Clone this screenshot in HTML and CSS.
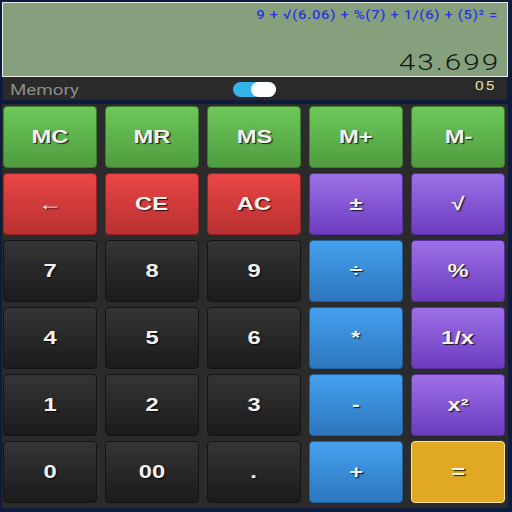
FILE: index.html
```html
<!DOCTYPE html>
<html>
<head>
<meta charset="utf-8">
<link rel="stylesheet" href="styles.css">
</head>
<body>
<div class="app">
  <div class="display">
    <div class="expr">9 + √(6.06) + %(7) + 1/(6) + (5)² =</div>
    <div class="result">43.699</div>
  </div>
  <div class="memory">
    <span class="mem-label">Memory</span>
    <span class="toggle"><span class="knob"></span></span>
    <span class="mem-count">05</span>
  </div>
  <div class="keypad">
    <button class="key green"><span>MC</span></button>
    <button class="key green"><span>MR</span></button>
    <button class="key green"><span>MS</span></button>
    <button class="key green"><span>M+</span></button>
    <button class="key green"><span>M-</span></button>

    <button class="key red"><span>←</span></button>
    <button class="key red"><span>CE</span></button>
    <button class="key red"><span>AC</span></button>
    <button class="key purple"><span>±</span></button>
    <button class="key purple"><span>√</span></button>

    <button class="key dark"><span>7</span></button>
    <button class="key dark"><span>8</span></button>
    <button class="key dark"><span>9</span></button>
    <button class="key blue"><span>÷</span></button>
    <button class="key purple"><span>%</span></button>

    <button class="key dark"><span>4</span></button>
    <button class="key dark"><span>5</span></button>
    <button class="key dark"><span>6</span></button>
    <button class="key blue"><span>*</span></button>
    <button class="key purple"><span>1/x</span></button>

    <button class="key dark"><span>1</span></button>
    <button class="key dark"><span>2</span></button>
    <button class="key dark"><span>3</span></button>
    <button class="key blue"><span>-</span></button>
    <button class="key purple"><span>x²</span></button>

    <button class="key dark"><span>0</span></button>
    <button class="key dark"><span>00</span></button>
    <button class="key dark"><span>.</span></button>
    <button class="key blue"><span>+</span></button>
    <button class="key yellow"><span>=</span></button>
  </div>
</div>
</body>
</html>
```
FILE: styles.css
```css
html, body {
  margin: 0;
  padding: 0;
  background: #0c1b3e;
  width: 512px;
  height: 512px;
  overflow: hidden;
}
.app {
  display: flex;
  flex-direction: column;
  padding-top: 2px;
  padding-left: 2px;
}
.display {
  box-sizing: border-box;
  width: 506px;
  height: 75px;
  border: 1px solid #e6ebe3;
  background: #86a07e;
  display: flex;
  flex-direction: column;
  align-items: flex-end;
  justify-content: space-between;
  padding: 4px 9px 3px 0;
}
.expr {
  font-family: Roboto, "Noto Sans", sans-serif;
  font-size: 13px;
  line-height: 15px;
  font-weight: 500;
  color: #2a36e0;
  letter-spacing: 0.6px;
  transform: scaleX(1.14);
  transform-origin: right center;
}
.result {
  font-family: Roboto, "DejaVu Sans", sans-serif;
  font-weight: 300;
  font-size: 22px;
  line-height: 20px;
  color: #111a11;
  letter-spacing: 1.5px;
  transform: scaleX(1.35);
  transform-origin: right center;
  margin-right: -2px;
}
.memory {
  box-sizing: border-box;
  width: 504px;
  height: 23px;
  margin-left: 1px;
  background: #2a2a2a;
  display: flex;
  align-items: center;
}
.mem-label {
  font-family: Roboto, "Noto Sans", sans-serif;
  font-size: 15px;
  color: #8c8c8c;
  margin-left: 7px;
  margin-top: 2px;
  display: inline-block;
  transform: scaleX(1.25);
  transform-origin: left center;
  width: 55px;
}
.toggle {
  width: 43px;
  height: 15px;
  border-radius: 8px;
  background: #33b5e8;
  margin-left: 168px;
  margin-top: 1px;
  display: flex;
  justify-content: flex-end;
  align-items: center;
}
.knob {
  width: 25px;
  height: 15px;
  border-radius: 8px;
  background: #ffffff;
}
.mem-count {
  font-family: Roboto, "DejaVu Sans", sans-serif;
  font-weight: 400;
  font-size: 13px;
  line-height: 13px;
  color: #e8dc9c;
  margin-left: auto;
  margin-right: 11px;
  margin-top: -6px;
  letter-spacing: 1px;
  display: inline-block;
  transform: scaleX(1.25);
  transform-origin: right center;
}
.keypad {
  box-sizing: border-box;
  width: 506px;
  height: 404px;
  margin-top: 4px;
  background: #2b2b2b;
  display: grid;
  grid-template-columns: repeat(5, 94px);
  grid-auto-rows: 62px;
  column-gap: 8px;
  row-gap: 5px;
  padding: 2px 3px 5px 1px;
}
.key {
  box-sizing: border-box;
  margin: 0;
  padding: 0;
  border-radius: 4px;
  font-family: "Liberation Sans", Arial, sans-serif;
  font-weight: bold;
  font-size: 18px;
  color: #f2f2f2;
  text-shadow: 1px 1px 1px rgba(0,0,0,0.8);
  border: 1px solid #000;
}
.key span {
  display: inline-block;
  transform: scaleX(1.32);
}
.green {
  background: linear-gradient(#6dc85a, #4f9c3f);
  border-color: #3f7d33;
}
.red {
  background: linear-gradient(#ea4545, #b83131);
  border-color: #962424;
}
.purple {
  background: linear-gradient(#9d70e8, #6c3cbe);
  border-color: #5a2fa3;
}
.blue {
  background: linear-gradient(#45a1ef, #2d76bd);
  border-color: #235f99;
}
.dark {
  background: linear-gradient(#353535, #1b1b1b);
  border-color: #141414;
}
.yellow {
  background: #e0a823;
  border: 1px solid #f6e3a6;
}
```
